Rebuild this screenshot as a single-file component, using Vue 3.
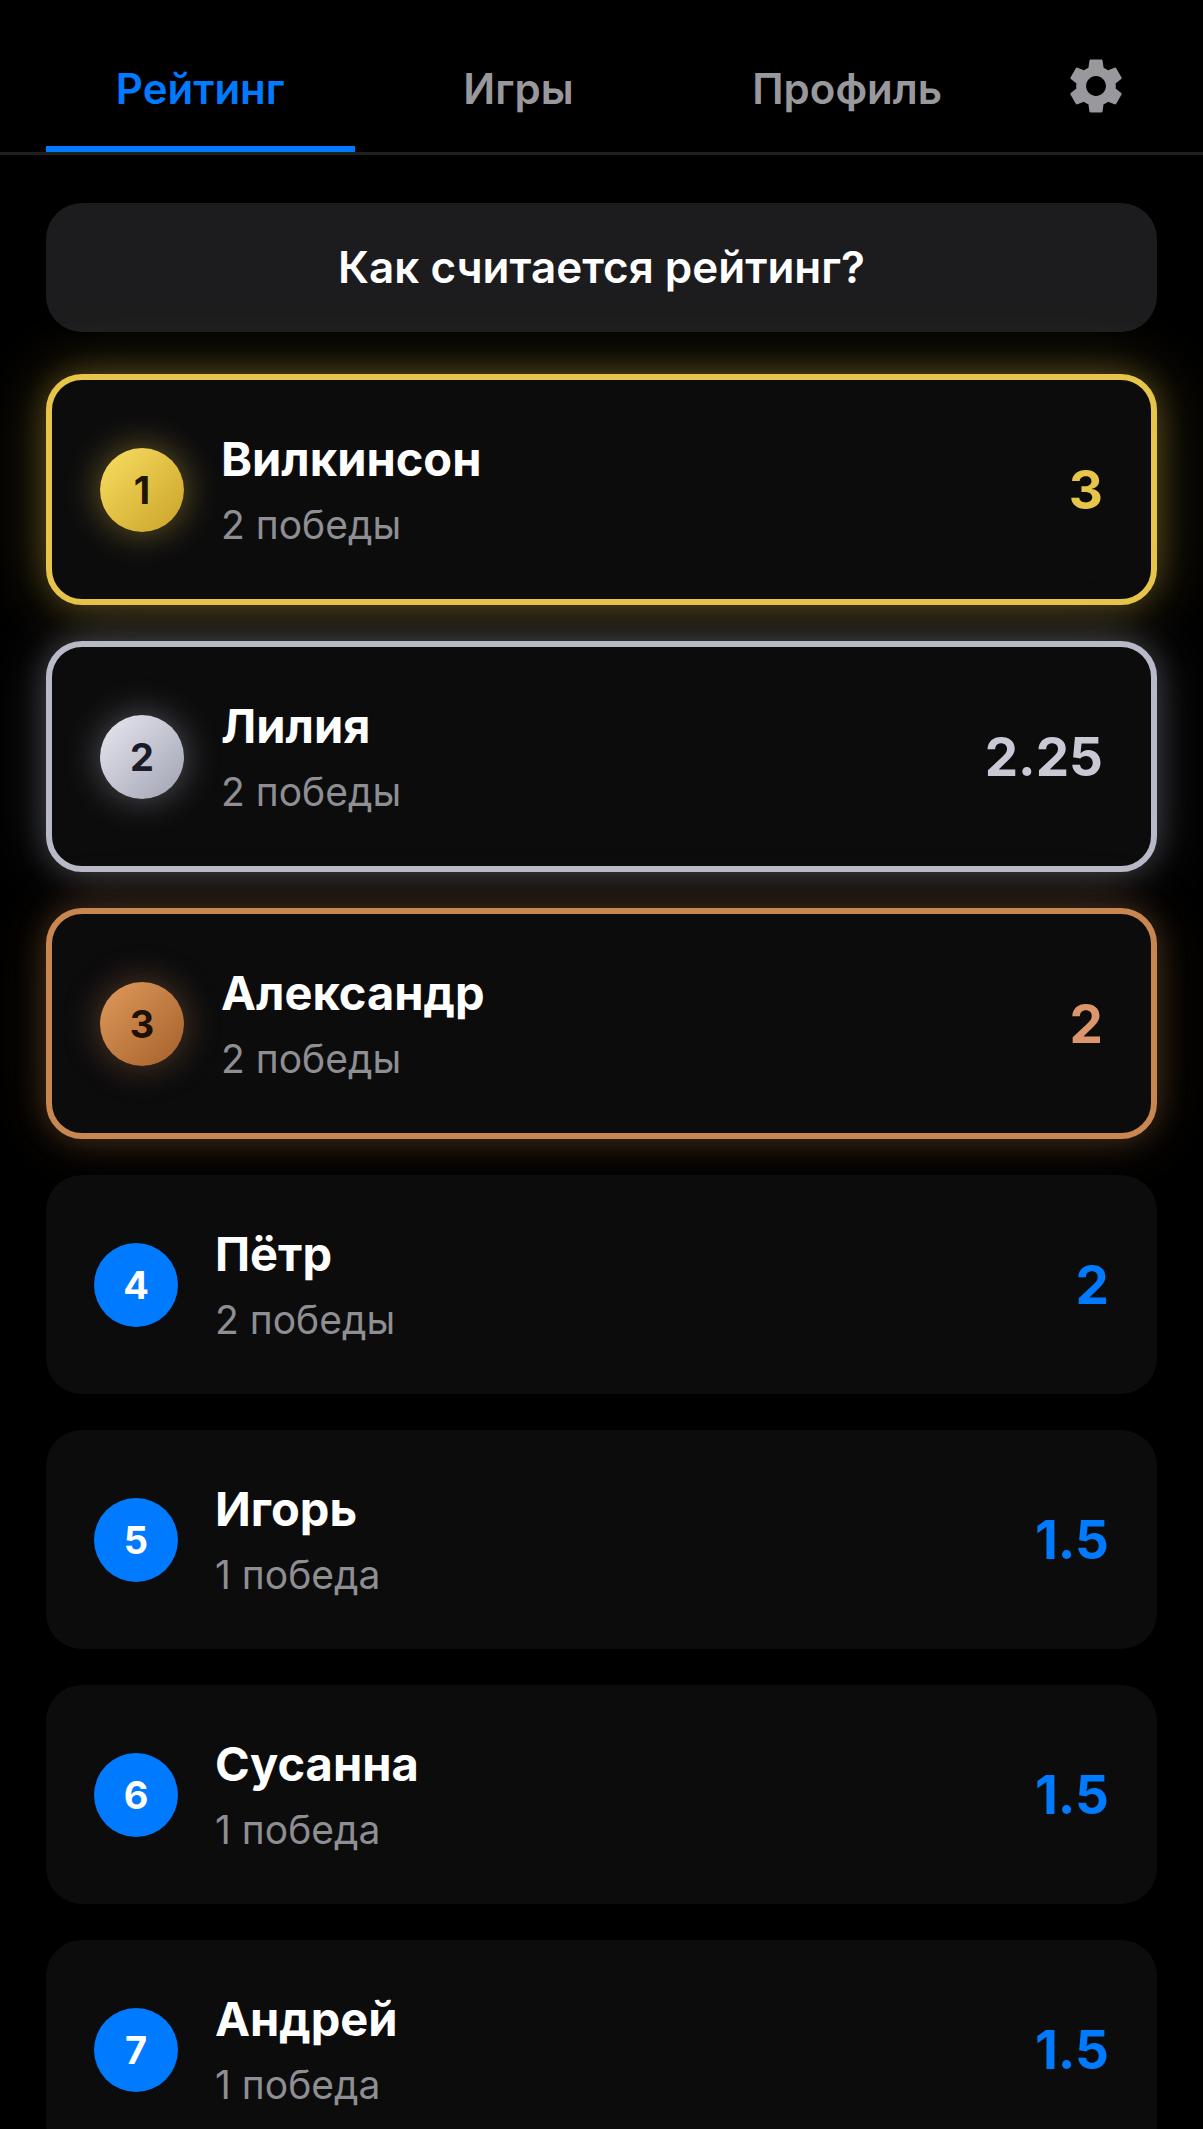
<script setup>
import { ref } from 'vue'

const tabs = ['Рейтинг', 'Игры', 'Профиль']
const activeTab = ref('Рейтинг')

const medals = ['gold', 'silver', 'bronze']

const players = [
  { name: 'Вилкинсон', wins: '2 победы', score: '3' },
  { name: 'Лилия', wins: '2 победы', score: '2.25' },
  { name: 'Александр', wins: '2 победы', score: '2' },
  { name: 'Пётр', wins: '2 победы', score: '2' },
  { name: 'Игорь', wins: '1 победа', score: '1.5' },
  { name: 'Сусанна', wins: '1 победа', score: '1.5' },
  { name: 'Андрей', wins: '1 победа', score: '1.5' }
]
</script>

<template>
  <div class="app">
    <header class="header">
      <nav class="tabs">
        <button
          v-for="tab in tabs"
          :key="tab"
          type="button"
          class="tab"
          :class="{ active: tab === activeTab }"
          @click="activeTab = tab"
        >{{ tab }}</button>
        <button type="button" class="settings" aria-label="Настройки">
          <svg class="gear" viewBox="0 0 24 24" aria-hidden="true">
            <path
              fill="currentColor"
              d="M19.14 12.94c.04-.3.06-.61.06-.94 0-.32-.02-.64-.07-.94l2.03-1.58c.18-.14.23-.41.12-.61l-1.92-3.32c-.12-.22-.37-.29-.59-.22l-2.39.96c-.5-.38-1.03-.7-1.62-.94l-.36-2.54c-.04-.24-.24-.41-.48-.41h-3.84c-.24 0-.43.17-.47.41l-.36 2.54c-.59.24-1.13.57-1.62.94l-2.39-.96c-.22-.08-.47 0-.59.22L2.74 8.87c-.12.21-.08.47.12.61l2.03 1.58c-.05.3-.09.63-.09.94s.02.64.07.94l-2.03 1.58c-.18.14-.23.41-.12.61l1.92 3.32c.12.22.37.29.59.22l2.39-.96c.5.38 1.03.7 1.62.94l.36 2.54c.05.24.24.41.48.41h3.84c.24 0 .44-.17.47-.41l.36-2.54c.59-.24 1.13-.56 1.62-.94l2.39.96c.22.08.47 0 .59-.22l1.92-3.32c.12-.22.07-.47-.12-.61l-2.01-1.58zM12 15.6c-1.98 0-3.6-1.62-3.6-3.6s1.62-3.6 3.6-3.6 3.6 1.62 3.6 3.6-1.62 3.6-3.6 3.6z"
            />
          </svg>
        </button>
      </nav>
    </header>

    <main class="content">
      <button type="button" class="info">Как считается рейтинг?</button>
      <ol class="list">
        <li v-for="(player, i) in players" :key="player.name" class="card" :class="medals[i]">
          <span class="rank">{{ i + 1 }}</span>
          <div class="player">
            <span class="name">{{ player.name }}</span>
            <span class="wins">{{ player.wins }}</span>
          </div>
          <span class="score">{{ player.score }}</span>
        </li>
      </ol>
    </main>
  </div>
</template>

<style>
body {
  background: #000;
}
</style>

<style scoped>
.app {
  display: flex;
  flex-direction: column;
  height: 100vh;
  overflow: hidden;
  background: #000;
  color: #fff;
  font-family: Inter, Roboto, sans-serif;
}

button {
  margin: 0;
  border: 0;
  background: none;
  color: inherit;
  font: inherit;
  cursor: pointer;
}

.header {
  flex: none;
  padding: 20px 62px 0 46px;
  border-bottom: 3px solid #1f1f20;
}

.tabs {
  display: flex;
  gap: 39px;
}

.tab {
  flex: 1 1 auto;
  padding: 44px 0 32px;
  border-bottom: 6px solid transparent;
  color: #98989d;
  font-size: 42px;
  font-weight: 600;
  line-height: 50px;
}

.tab.active {
  border-bottom-color: #007aff;
  color: #007aff;
}

.settings {
  display: flex;
  align-items: center;
  justify-content: center;
  flex: none;
  width: 90px;
  padding: 0;
  color: #98989d;
}

.gear {
  width: 66px;
  height: 66px;
}

.content {
  flex: 1;
  min-height: 0;
  padding: 48px 46px;
  overflow-y: auto;
  scrollbar-width: none;
}

.info {
  display: block;
  width: 100%;
  padding: 36px;
  border-radius: 36px;
  background: #1c1c1e;
  font-size: 44px;
  font-weight: 600;
  line-height: 57px;
}

.list {
  display: flex;
  flex-direction: column;
  gap: 36px;
  margin: 42px 0 0;
  padding: 0;
  list-style: none;
}

.card {
  display: flex;
  align-items: center;
  gap: 37px;
  padding: 50px 48px;
  border-radius: 36px;
  background: #0c0c0d;
}

.rank {
  display: flex;
  align-items: center;
  justify-content: center;
  flex: none;
  width: 84px;
  height: 84px;
  border-radius: 50%;
  background: #007aff;
  font-size: 38px;
  font-weight: 700;
}

.player {
  display: flex;
  flex: 1;
  flex-direction: column;
  gap: 12px;
  min-width: 0;
}

.name {
  font-size: 47px;
  font-weight: 700;
  line-height: 58px;
}

.wins {
  color: #8e8e93;
  font-size: 39px;
  line-height: 49px;
}

.score {
  color: #007aff;
  font-size: 53px;
  font-weight: 700;
}

.gold {
  border: 6px solid #e6c54a;
  box-shadow: 0 0 30px rgba(230, 197, 74, 0.25), 0 0 66px rgba(230, 197, 74, 0.28);
}

.gold .rank {
  background: linear-gradient(135deg, #f9df62, #c9a227);
  box-shadow: 0 0 36px rgba(230, 197, 74, 0.45);
  color: #1f1600;
}

.gold .score {
  color: #e6c54a;
}

.silver {
  border: 6px solid #b9bac8;
  box-shadow: 0 0 30px rgba(185, 186, 200, 0.25), 0 0 60px rgba(185, 186, 200, 0.24);
}

.silver .rank {
  background: linear-gradient(135deg, #e8e8f0, #a0a2b2);
  box-shadow: 0 0 36px rgba(200, 201, 212, 0.4);
  color: #1a1a28;
}

.silver .score {
  color: #c8c9d4;
}

.bronze {
  border: 6px solid #c88650;
  box-shadow: 0 0 30px rgba(200, 134, 80, 0.25), 0 0 60px rgba(200, 134, 80, 0.2);
}

.bronze .rank {
  background: linear-gradient(135deg, #e09a5c, #a4602a);
  box-shadow: 0 0 36px rgba(200, 134, 80, 0.4);
  color: #1f0f04;
}

.bronze .score {
  color: #dd966b;
}
</style>
